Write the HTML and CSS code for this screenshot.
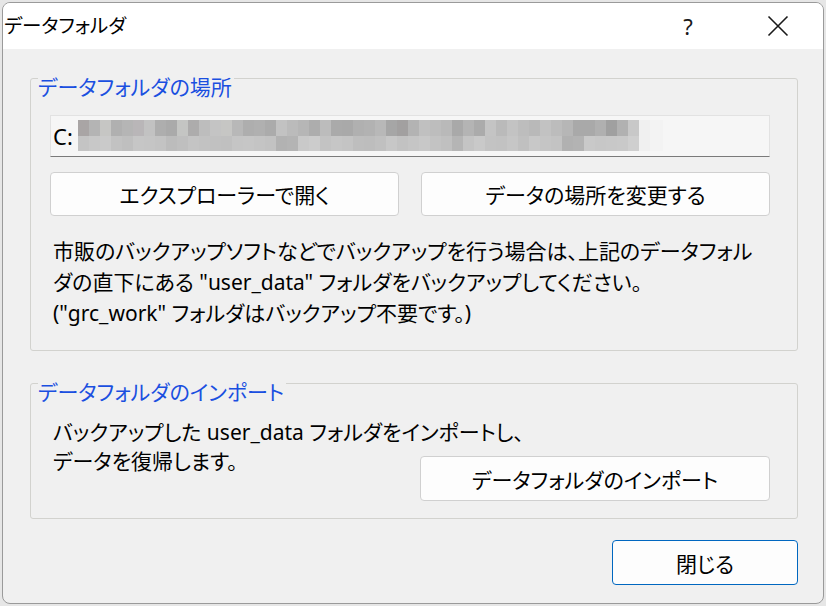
FILE: index.html
```html
<!DOCTYPE html>
<html lang="ja">
<head>
    <meta charset="UTF-8">
    <meta name="viewport" content="width=device-width, initial-scale=1.0">
    <title>データフォルダ</title>
    <link rel="stylesheet" href="styles.css">
</head>
<body>
    <div class="window">
        <div class="titlebar">
            <span class="title">データフォルダ</span>
            <span class="help">?</span>
            <span class="close-icon">
                <svg width="22" height="22" viewBox="0 0 22 22">
                    <path d="M1.5 1.5 L20.5 20.5 M20.5 1.5 L1.5 20.5" stroke="#1a1a1a" stroke-width="1.6" fill="none"/>
                </svg>
            </span>
        </div>

        <div class="content">
            <section class="group group-location">
                <span class="legend">データフォルダの場所</span>

                <div class="path-field">
                    <span class="drive">C:</span>
                    <!-- blurred folder path -->
                    <svg class="mosaic" width="585" height="31" shape-rendering="crispEdges">
                        <g>
                            <rect x="0" y="0" width="11" height="16" fill="#a9a5a5"/>
                            <rect x="11" y="0" width="11" height="16" fill="#b4b4b4"/>
                            <rect x="22" y="0" width="11" height="16" fill="#c6c6c4"/>
                            <rect x="33" y="0" width="11" height="16" fill="#b0b0b0"/>
                            <rect x="44" y="0" width="11" height="16" fill="#b5b5b5"/>
                            <rect x="55" y="0" width="11" height="16" fill="#b9b6b8"/>
                            <rect x="66" y="0" width="11" height="16" fill="#c2c2c2"/>
                            <rect x="77" y="0" width="11" height="16" fill="#aeaeae"/>
                            <rect x="88" y="0" width="11" height="16" fill="#aaaaaa"/>
                            <rect x="99" y="0" width="11" height="16" fill="#c4c5c3"/>
                            <rect x="110" y="0" width="11" height="16" fill="#adacac"/>
                            <rect x="121" y="0" width="11" height="16" fill="#bdbdbd"/>
                            <rect x="132" y="0" width="11" height="16" fill="#c4c4c4"/>
                            <rect x="143" y="0" width="11" height="16" fill="#c6c6c4"/>
                            <rect x="154" y="0" width="11" height="16" fill="#b8b8b8"/>
                            <rect x="165" y="0" width="11" height="16" fill="#aeaeae"/>
                            <rect x="176" y="0" width="11" height="16" fill="#b0b0b0"/>
                            <rect x="187" y="0" width="11" height="16" fill="#ababab"/>
                            <rect x="198" y="0" width="11" height="16" fill="#c2c2c2"/>
                            <rect x="209" y="0" width="11" height="16" fill="#bbbbbb"/>
                            <rect x="220" y="0" width="11" height="16" fill="#b6b6b6"/>
                            <rect x="231" y="0" width="11" height="16" fill="#adadad"/>
                            <rect x="242" y="0" width="11" height="16" fill="#bcbcbc"/>
                            <rect x="253" y="0" width="11" height="16" fill="#aaaaaa"/>
                            <rect x="264" y="0" width="11" height="16" fill="#a9a9a9"/>
                            <rect x="275" y="0" width="11" height="16" fill="#b0b0b0"/>
                            <rect x="286" y="0" width="11" height="16" fill="#b2b2b2"/>
                            <rect x="297" y="0" width="11" height="16" fill="#b8b8b8"/>
                            <rect x="308" y="0" width="11" height="16" fill="#a6a6a6"/>
                            <rect x="319" y="0" width="11" height="16" fill="#a2a0a0"/>
                            <rect x="330" y="0" width="11" height="16" fill="#b3b3b3"/>
                            <rect x="341" y="0" width="11" height="16" fill="#c0c0c0"/>
                            <rect x="352" y="0" width="11" height="16" fill="#bdbdbd"/>
                            <rect x="363" y="0" width="11" height="16" fill="#b9b9b9"/>
                            <rect x="374" y="0" width="11" height="16" fill="#a9a9a9"/>
                            <rect x="385" y="0" width="11" height="16" fill="#b4b4b4"/>
                            <rect x="396" y="0" width="11" height="16" fill="#ababab"/>
                            <rect x="407" y="0" width="11" height="16" fill="#c4c4c4"/>
                            <rect x="418" y="0" width="11" height="16" fill="#bababa"/>
                            <rect x="429" y="0" width="11" height="16" fill="#c3c3c3"/>
                            <rect x="440" y="0" width="11" height="16" fill="#bdbdbd"/>
                            <rect x="451" y="0" width="11" height="16" fill="#b9b9b9"/>
                            <rect x="462" y="0" width="11" height="16" fill="#c2c2c2"/>
                            <rect x="473" y="0" width="11" height="16" fill="#bcbcbc"/>
                            <rect x="484" y="0" width="11" height="16" fill="#b6b6b6"/>
                            <rect x="495" y="0" width="11" height="16" fill="#a9a9a9"/>
                            <rect x="506" y="0" width="11" height="16" fill="#a9a9a9"/>
                            <rect x="517" y="0" width="11" height="16" fill="#b0b0b0"/>
                            <rect x="528" y="0" width="11" height="16" fill="#a0a0a0"/>
                            <rect x="539" y="0" width="11" height="16" fill="#b1b1b1"/>
                            <rect x="550" y="0" width="11" height="16" fill="#c8c8c8"/>
                            <rect x="561" y="0" width="11" height="16" fill="#f0f0f0"/>
                            <rect x="572" y="0" width="13" height="16" fill="#f3f3f3"/>
                        </g>
                        <g>
                            <rect x="0" y="16" width="11" height="15" fill="#c4c4c4"/>
                            <rect x="11" y="16" width="11" height="15" fill="#c8c8c8"/>
                            <rect x="22" y="16" width="11" height="15" fill="#cacaca"/>
                            <rect x="33" y="16" width="11" height="15" fill="#c2c2c2"/>
                            <rect x="44" y="16" width="11" height="15" fill="#bfbfbf"/>
                            <rect x="55" y="16" width="11" height="15" fill="#c6c6c6"/>
                            <rect x="66" y="16" width="11" height="15" fill="#c5c5c5"/>
                            <rect x="77" y="16" width="11" height="15" fill="#c3c3c3"/>
                            <rect x="88" y="16" width="11" height="15" fill="#bcbcbc"/>
                            <rect x="99" y="16" width="11" height="15" fill="#bfbfbf"/>
                            <rect x="110" y="16" width="11" height="15" fill="#c4c4c4"/>
                            <rect x="121" y="16" width="11" height="15" fill="#c2c2c2"/>
                            <rect x="132" y="16" width="11" height="15" fill="#c1c1c1"/>
                            <rect x="143" y="16" width="11" height="15" fill="#c0c0c0"/>
                            <rect x="154" y="16" width="11" height="15" fill="#c5c5c5"/>
                            <rect x="165" y="16" width="11" height="15" fill="#c6c6c6"/>
                            <rect x="176" y="16" width="11" height="15" fill="#c4c4c4"/>
                            <rect x="187" y="16" width="11" height="15" fill="#c2c2c2"/>
                            <rect x="198" y="16" width="11" height="15" fill="#b2b2b2"/>
                            <rect x="209" y="16" width="11" height="15" fill="#b4b4b4"/>
                            <rect x="220" y="16" width="11" height="15" fill="#c9c9c9"/>
                            <rect x="231" y="16" width="11" height="15" fill="#cccccc"/>
                            <rect x="242" y="16" width="11" height="15" fill="#c3c3c3"/>
                            <rect x="253" y="16" width="11" height="15" fill="#c6c6c6"/>
                            <rect x="264" y="16" width="11" height="15" fill="#c4c4c4"/>
                            <rect x="275" y="16" width="11" height="15" fill="#bebebe"/>
                            <rect x="286" y="16" width="11" height="15" fill="#bdbdbd"/>
                            <rect x="297" y="16" width="11" height="15" fill="#c0c0c0"/>
                            <rect x="308" y="16" width="11" height="15" fill="#c7c7c7"/>
                            <rect x="319" y="16" width="11" height="15" fill="#c2c2c2"/>
                            <rect x="330" y="16" width="11" height="15" fill="#c5c5c5"/>
                            <rect x="341" y="16" width="11" height="15" fill="#c8c8c8"/>
                            <rect x="352" y="16" width="11" height="15" fill="#c3c3c3"/>
                            <rect x="363" y="16" width="11" height="15" fill="#c0c0c0"/>
                            <rect x="374" y="16" width="11" height="15" fill="#b5b5b5"/>
                            <rect x="385" y="16" width="11" height="15" fill="#c4c4c4"/>
                            <rect x="396" y="16" width="11" height="15" fill="#c9c9c9"/>
                            <rect x="407" y="16" width="11" height="15" fill="#c3c3c3"/>
                            <rect x="418" y="16" width="11" height="15" fill="#c2c2c2"/>
                            <rect x="429" y="16" width="11" height="15" fill="#c6c6c6"/>
                            <rect x="440" y="16" width="11" height="15" fill="#c0c0c0"/>
                            <rect x="451" y="16" width="11" height="15" fill="#c8c8c8"/>
                            <rect x="462" y="16" width="11" height="15" fill="#c5c5c5"/>
                            <rect x="473" y="16" width="11" height="15" fill="#c3c3c3"/>
                            <rect x="484" y="16" width="11" height="15" fill="#b1b1b1"/>
                            <rect x="495" y="16" width="11" height="15" fill="#b3b3b3"/>
                            <rect x="506" y="16" width="11" height="15" fill="#c9c9c9"/>
                            <rect x="517" y="16" width="11" height="15" fill="#c7c7c7"/>
                            <rect x="528" y="16" width="11" height="15" fill="#c8c8c8"/>
                            <rect x="539" y="16" width="11" height="15" fill="#c9c9c9"/>
                            <rect x="550" y="16" width="11" height="15" fill="#cfcfcf"/>
                            <rect x="561" y="16" width="11" height="15" fill="#f0f0f0"/>
                            <rect x="572" y="16" width="13" height="15" fill="#f3f3f3"/>
                        </g>
                    </svg>
                </div>

                <div class="button-row">
                    <button class="btn">エクスプローラーで開く</button>
                    <button class="btn">データの場所を変更する</button>
                </div>

                <p class="note">
                    市販のバックアップソフトなどでバックアップを行う場合は、上記のデータフォル<br>
                    ダの直下にある "user_data" フォルダをバックアップしてください。<br>
                    ("grc_work" フォルダはバックアップ不要です。)
                </p>
            </section>

            <section class="group group-import">
                <span class="legend">データフォルダのインポート</span>

                <p class="import-note">
                    バックアップした user_data フォルダをインポートし、<br>
                    データを復帰します。
                </p>

                <div class="import-row">
                    <button class="btn">データフォルダのインポート</button>
                </div>
            </section>

            <div class="footer">
                <button class="btn btn-close">閉じる</button>
            </div>
        </div>
    </div>
</body>
</html>
```

FILE: styles.css
```css
body {
    margin: 0;
    padding: 0;
    background: #e6e6e6;
    font-family: "Noto Sans", "Noto Sans CJK JP", sans-serif;
    font-feature-settings: "palt";
    color: #000;
}
.window {
    margin: 2px;
    width: 822px;
    height: 602px;
    box-sizing: border-box;
    border: 1px solid #9a9a9a;
    border-radius: 8px;
    background-color: #f0f0f0;
    overflow: hidden;
}
.titlebar {
    height: 46px;
    background-color: #fff;
    display: flex;
    align-items: center;
}
.title {
    flex: 1;
    padding-left: 1px;
    font-size: 19.5px;
    line-height: 22px;
    color: #000;
}
.help {
    width: 22px;
    margin-right: 68px;
    text-align: center;
    font-size: 22px;
    line-height: 24px;
    color: #1a1a1a;
}
.close-icon {
    display: flex;
    width: 22px;
    height: 22px;
    margin-right: 34px;
}
.content {
    padding: 29px 25px 0 27px;
}
.group {
    position: relative;
    border: 1px solid #d2d2ce;
    border-radius: 3px;
}
.legend {
    position: absolute;
    top: -2px;
    left: 7px;
    padding-right: 2px;
    background-color: #f0f0f0;
    color: #1a4fe0;
    font-size: 21px;
    line-height: 20px;
}
.group-location {
    padding: 36px 27px 21px 19px;
}
.path-field {
    height: 42px;
    box-sizing: border-box;
    display: flex;
    align-items: flex-start;
    background-color: #f6f6f6;
    border: 1px solid #e2e2e2;
    border-bottom: 1px solid #7a7a7a;
}
.drive {
    padding-left: 2px;
    width: 25px;
    font-size: 22px;
    line-height: 40px;
}
.mosaic {
    display: block;
    margin-top: 4px;
}
.button-row {
    display: flex;
    gap: 22px;
    margin-top: 15px;
}
.btn {
    font-family: inherit;
    font-feature-settings: "palt";
    font-size: 21px;
    color: #000;
    background-color: #fdfdfd;
    border: 1px solid #d0d0d0;
    border-radius: 4px;
    padding: 0;
    height: 44px;
    cursor: pointer;
}
.button-row .btn {
    flex: 1;
}
.note {
    margin: 20px 0 0 3px;
    font-size: 21px;
    line-height: 31px;
}
.group-import {
    margin-top: 32px;
    padding: 34px 27px 17px 22px;
}
.import-note {
    margin: 0;
    font-size: 21px;
    line-height: 29px;
}
.import-row {
    display: flex;
    justify-content: flex-end;
    margin-top: -20px;
}
.import-row .btn {
    width: 350px;
    height: 45px;
}
.footer {
    display: flex;
    justify-content: flex-end;
    margin-top: 21px;
}
.btn-close {
    width: 186px;
    height: 45px;
    border: 1px solid #0067c0;
    background-color: #fdfdfd;
}
```
